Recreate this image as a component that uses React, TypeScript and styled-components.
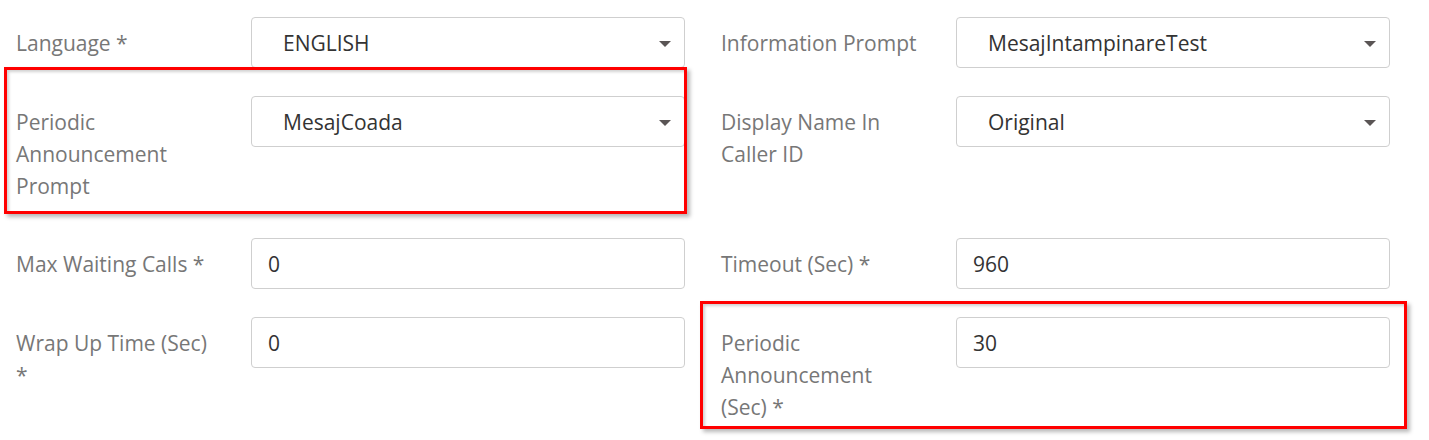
import React from 'react';
import styled, { createGlobalStyle } from 'styled-components';

const GlobalStyle = createGlobalStyle`
  html, body {
    margin: 0;
    padding: 0;
    background: #fff;
  }
  body {
    font-family: 'Open Sans', 'Liberation Sans', sans-serif;
  }
`;

const Page = styled.div`
  position: relative;
  width: 1429px;
  height: 440px;
  padding-top: 17px;
  box-sizing: border-box;
  overflow: hidden;
`;

const FormGrid = styled.div`
  display: grid;
  grid-template-columns: 705px 705px;
  row-gap: 28px;
  align-items: start;
`;

const Field = styled.div`
  display: flex;
  align-items: flex-start;
`;

const Label = styled.div`
  width: 235px;
  box-sizing: border-box;
  padding: 10px 20px 8px 16px;
  font-size: 21px;
  line-height: 32px;
  color: #777;
`;

const Control = styled.div<{ $select?: boolean }>`
  width: 434px;
  height: 51px;
  margin-left: 16px;
  box-sizing: border-box;
  border: 1px solid #cfcfcf;
  border-radius: 4px;
  display: flex;
  align-items: center;
  justify-content: space-between;
  padding: ${({ $select }) => ($select ? '0 13px 0 31px' : '0 16px')};
  font-size: 21px;
  color: #333;
  background: #fff;
`;

const Caret = styled.span`
  width: 0;
  height: 0;
  border-left: 6px solid transparent;
  border-right: 6px solid transparent;
  border-top: 6px solid #5a5555;
  margin-top: 2px;
`;

const Highlight = styled.div<{ $x: number; $y: number; $w: number; $h: number }>`
  position: absolute;
  left: ${({ $x }) => $x}px;
  top: ${({ $y }) => $y}px;
  width: ${({ $w }) => $w}px;
  height: ${({ $h }) => $h}px;
  box-sizing: border-box;
  border: 3px solid #ff0000;
  box-shadow: 3px 3px 4px rgba(0, 0, 0, 0.28), inset 2px 2px 3px rgba(0, 0, 0, 0.18);
  pointer-events: none;
`;

type FieldDef = { label: string; value: string; select?: boolean };

const fields: FieldDef[] = [
  { label: 'Language *', value: 'ENGLISH', select: true },
  { label: 'Information Prompt', value: 'MesajIntampinareTest', select: true },
  { label: 'Periodic Announcement Prompt', value: 'MesajCoada', select: true },
  { label: 'Display Name In Caller ID', value: 'Original', select: true },
  { label: 'Max Waiting Calls *', value: '0' },
  { label: 'Timeout (Sec) *', value: '960' },
  { label: 'Wrap Up Time (Sec) *', value: '0' },
  { label: 'Periodic Announcement (Sec) *', value: '30' },
];

export default function App() {
  return (
    <>
      <GlobalStyle />
      <Page>
        <FormGrid>
          {fields.map((f) => (
            <Field key={f.label}>
              <Label>{f.label}</Label>
              <Control $select={f.select}>
                <span>{f.value}</span>
                {f.select && <Caret />}
              </Control>
            </Field>
          ))}
        </FormGrid>
        <Highlight $x={4} $y={67} $w={683} $h={147} />
        <Highlight $x={700} $y={301} $w={707} $h={128} />
      </Page>
    </>
  );
}
